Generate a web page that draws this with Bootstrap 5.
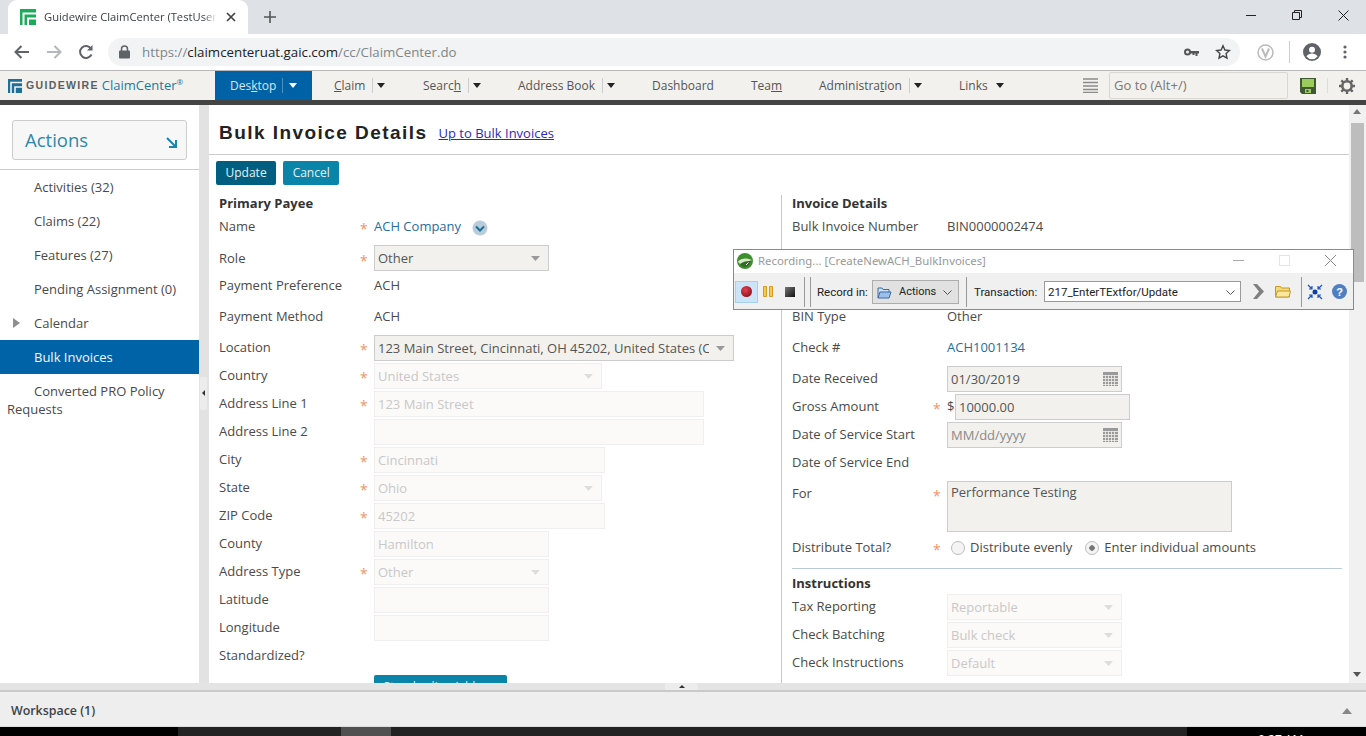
<!DOCTYPE html>
<html lang="en">
<head>
  <meta charset="UTF-8" />
  <meta name="viewport" content="width=device-width, initial-scale=1.0"/>
  <title>Guidewire ClaimCenter</title>
  <link href="https://cdn.jsdelivr.net/npm/bootstrap@5.3.0/dist/css/bootstrap.min.css" rel="stylesheet" />
  <style>
    html, body { height: 100%; }
    body {
      width: 1366px; height: 736px; overflow: hidden; position: relative;
      font-family: "Open Sans", "Noto Sans", sans-serif; font-size: 13px; color: #4a4a4a;
      background: #fff;
    }
    a { color: #1f6e9c; text-decoration: none; }

    /* browser chrome */
    .tabstrip { height: 34px; background: #dee1e6; padding-left: 8px; flex: none; }
    .chrome-tab {
      width: 240px; height: 34px; background: #fff; border-radius: 9px 9px 0 0;
      padding-left: 12px; color: #3c4043; font-size: 11.2px; overflow: hidden; white-space: nowrap;
    }
    .tab-title { width: 173px; margin-left: 8px; overflow: hidden; -webkit-mask-image: linear-gradient(90deg, #000 92%, transparent); mask-image: linear-gradient(90deg, #000 92%, transparent); }
    .tab-close { margin-left: 9px; }
    .tab-plus { margin-left: 15px; margin-top: 10px; }
    .win-btns { margin-left: auto; }
    .win-btn { width: 46px; height: 30px; }
    .urlbar { height: 37px; background: #fff; border-bottom: 1px solid #b9b9b9; flex: none; }
    .urlnav { width: 108px; padding-left: 14px; gap: 16px; }
    .urlpill {
      width: 1132px; height: 28px; background: #f1f3f4; border-radius: 14px;
      padding-left: 11px; font-size: 13.3px; color: #80868b; white-space: nowrap;
    }
    .urlpill b { font-weight: 400; color: #202124; }
    .url-text { margin-left: 12px; padding-top: 2px; }
    .urlright { margin-left: auto; padding-right: 9px; gap: 16px; }
    .ext-v { margin-left: 17px; }
    .url-sep { width: 1px; height: 22px; background: #ccc; margin-left: 15px; }
    .avatar { margin-left: 13px; }
    .dots { margin-left: 22px; }

    /* app header */
    .appbar { height: 29px; background: #f3f1ed; flex: none; white-space: nowrap; color: #555; font-size: 12px; }
    .brandbox { width: 215px; padding-left: 8px; }
    .brand-gw { font-family: "Liberation Sans", sans-serif; font-weight: 700; font-size: 10.5px; letter-spacing: 1.35px; color: #5a5f63; margin-left: 4px; }
    .brand-cc { font-size: 13px; color: #1b78a6; margin-left: 3px; }
    .brand-cc sup { font-size: 8px; top: -.6em; }
    .nav-desk { width: 97px; height: 29px; background: #0062a6; color: #d5e7f2; padding-left: 15px; }
    .nav-desk .nav-sep { background: #4d90c1; margin-left: 6px; }
    .nav-desk .nav-caret { border-top-color: #fff; margin-left: 6px; }
    .nav-sep { width: 1px; height: 15px; background: #ccc; margin-left: 7px; }
    .nav-caret { width: 0; height: 0; border: 4px solid transparent; border-top: 5px solid #222; border-bottom: 0; margin-left: 4px; }
    .tn-claim { width: 89px; margin-left: 22px; }
    .tn-search { width: 95px; }
    .tn-addr { width: 134px; }
    .tn-dash { width: 99px; }
    .tn-team { width: 68px; }
    .tn-admin { width: 140px; }
    .tn-links { width: 124px; }
    .tn-links .nav-caret { margin-left: 8px; }
    .goto { width: 179px; height: 27px; border: 1px solid #d9d7d2; background: #f3f1ed; padding-left: 4px; color: #777; margin-left: 11px; border-radius: 2px; font-size: 13px; }
    .hdr-sep { width: 1px; height: 15px; background: #ddd; margin-left: 11px; }
    .saveic { margin-left: 12px; }
    .gearic { margin-left: 11px; }
    .darkbar { height: 5px; background: #444; flex: none; }

    /* work area */
    .workarea { height: 578px; flex: none; overflow: hidden; }
    .sidepane { width: 199px; flex: none; }
    .act-box {
      margin: 15px 12px 9px; height: 40px; background: #f7f7f7; border: 1px solid #ccc; border-radius: 3px;
      padding: 0 9px 0 12px; font-size: 18.5px; color: #2e87ad;
    }
    .act-arrow { margin-top: 4px; }
    .side-list { border-top: 1px solid #ccc; border-radius: 0; }
    .side-list .list-group-item {
      border: 0; padding: 0 0 0 34px; height: 34px; line-height: 34px; color: #4a4a4a; font-size: 13px; position: relative;
    }
    .side-list .list-group-item.active { background: #0063a8; color: #f2f8fb; margin-top: 0; }
    .side-list .side-wrap { height: auto; line-height: 18px; padding: 8px 10px 8px 7px; text-indent: 27px; }
    .side-tri { position: absolute; left: 13px; top: 12px; width: 0; height: 0; border: 5px solid transparent; border-left: 7px solid #8e8e8e; border-right: 0; }
    .vsplit { width: 10px; flex: none; background: #e2e2e2; position: relative; }
    .vgrip { position: absolute; left: 1px; top: 272px; width: 7px; height: 33px; background: #ececec; border-radius: 2px; }
    .vgrip::after { content: ""; position: absolute; left: 2px; top: 13px; border: 3px solid transparent; border-right: 3px solid #333; border-left: 0; }
    .mainpane { width: 1140px; flex: none; overflow: hidden; }
    .titlebar { height: 50px; border-bottom: 1px solid #ccc; padding: 8px 0 0 10px; }
    .pagetitle { font-family: "Liberation Sans", sans-serif; font-weight: 700; font-size: 19px; letter-spacing: 1.45px; color: #222; margin: 0; }
    .uplink { color: #2b2bb3; text-decoration: underline; margin-left: 11px; }
    .btnrow { padding: 6px 0 7px 7px; gap: 7px; }
    .btn-gw { height: 24px; padding: 0 9.5px; font-size: 12px; line-height: 22px; color: #e4f1f6; border-radius: 2px; border: 0; white-space: nowrap; }
    .btn-upd { background: #005f80; }
    .btn-can { background: #0a84a8; }
    .btn-std { background: #0a84a8; width: 133px; margin-left: 155px; margin-top: 6px; display: block; }
    .formcol-l { width: 573px; flex: none; padding-left: 10px; position: relative; }
    .formcol-l::after { content: ""; position: absolute; right: 0; top: 3px; bottom: 0; width: 1px; background: #b9ccd8; }
    .formcol-r { width: 560px; flex: none; padding-left: 10px; }
    .sechead { height: 20px; line-height: 22px; font-weight: 700; color: #333; }
    .frow { height: 28px; padding-top: 2px; }
    .flabel { width: 141px; flex: none; }
    .fstar { width: 14px; flex: none; color: #ef946a; font-size: 14px; line-height: 18px; padding-top: 3px; }
    .gap3 { margin-top: 3px; }
    .gapneg { margin-top: -1px; }
    .gapbin { margin-top: 62px; }
    .role-box { margin-top: -2px; }
    .name-drop { margin: 2px 0 0 11px; }
    .fbox, .fbox:disabled, .fbox:focus {
      height: 26px; padding: 0 3px; font-size: 13px; line-height: 24px; border-radius: 0;
      background-color: #f2f1ee; border: 1px solid #ccc; color: #555; box-shadow: none; opacity: 1; font-family: inherit;
    }
    .fbox:disabled { background-color: #fbfaf9; border-color: #efefef; color: #c8c8c8; }
    select.fbox {
      background-image: url("data:image/svg+xml,%3Csvg xmlns='http://www.w3.org/2000/svg' width='9' height='5'%3E%3Cpath d='M0 0h9L4.500 5z' fill='%23999'/%3E%3C/svg%3E");
      background-repeat: no-repeat; background-position: right 8px center; background-size: 9px 5px; padding-right: 24px;
    }
    select.fbox:disabled { background-image: url("data:image/svg+xml,%3Csvg xmlns='http://www.w3.org/2000/svg' width='9' height='5'%3E%3Cpath d='M0 0h9L4.500 5z' fill='%23ddd'/%3E%3C/svg%3E"); }
    .w175 { width: 175px; }
    .w228 { width: 228px; }
    .w231 { width: 231px; }
    .w330 { width: 330px; }
    .w360 { width: 360px; }
    .w285 { width: 285px; }
    .datewrap { position: relative; width: 175px; }
    .calic { position: absolute; right: 4px; top: 6px; }
    .ph-box::placeholder { color: #8a8a8a; opacity: 1; }
    .ta-row { height: 57px; }
    .ta-row .flabel { padding-top: 4px; }
    .ta-box, .ta-box:focus { height: 51px; margin-top: 5px; line-height: 18px; padding: 1px 3px; resize: none; }
    .ta-star { padding-top: 11px; }
    .dollar { width: 8px; flex: none; }
    .radioline { gap: 5px; margin-left: 4px; }
    .radio-gw, .radio-gw:checked {
      width: 14px; height: 14px; margin: 0; flex: none; background-color: #f4f4f4; border: 1px solid #bdbdbd; box-shadow: none;
    }
    .radio-gw:checked { background-image: radial-gradient(circle, #777 0 2.5px, transparent 3px); }
    .radio-gw.radio-gap { margin-left: 8px; }
    .sec-rule { height: 1px; background: #b9ccd8; width: 550px; margin-top: 7px; }
    .secsub { height: 22px; line-height: 22px; margin-top: 3px; margin-bottom: -2px; font-weight: 700; color: #333; }
    .vscroll { width: 17px; flex: none; background: #f1f1f1; position: relative; }
    .vthumb { position: absolute; left: 2px; top: 18px; width: 13px; height: 159px; background: #bdbdbd; }
    .sc-up, .sc-down { position: absolute; left: 4px; width: 0; height: 0; border: 4px solid transparent; }
    .sc-up { top: 4px; border-bottom: 5px solid #777; border-top: 0; }
    .sc-down { bottom: 6px; border-top: 5px solid #555; border-bottom: 0; }

    /* bottom */
    .hsplit { height: 9px; flex: none; background: #e4e4e4; border-bottom: 2px solid #c9c9c9; position: relative; }
    .hgrip { position: absolute; left: 665px; top: 0; width: 33px; height: 7px; background: #ececec; border-radius: 2px 2px 0 0; }
    .hgrip::after { content: ""; position: absolute; left: 14px; top: 2px; border: 3px solid transparent; border-bottom: 3px solid #333; border-top: 0; }
    .wsbar { height: 35px; flex: none; background: #eee; padding: 4px 14px 0 11px; font-weight: 600; font-size: 12.4px; color: #3d4346; border-bottom: 1px solid #ddd; }
    .ws-tri { width: 0; height: 0; border: 5px solid transparent; border-bottom: 6px solid #888; border-top: 0; }
    .taskbar { height: 9px; flex: none; background: #222; overflow: hidden; position: relative; }
    .tb-start { width: 178px; background: #000; }
    .tb-mid { width: 163px; }
    .tb-act { width: 50px; background: #505050; }
    .tb-fill { width: 796px; }
    .tb-clock { flex: 1; background: #000; color: #fff; font-size: 12px; padding: 4px 0 0 71px; white-space: nowrap; }

    /* recorder window sits over the page */
    .recwin {
      position: absolute; left: 733px; top: 249px; width: 621px; height: 61px; border: 1px solid #8a8a8a; background: #f0f0f0;
      font-family: "Noto Sans", "Open Sans", sans-serif; font-size: 11.4px; color: #222; white-space: nowrap; overflow: hidden;
    }
    .rectitle { height: 23px; background: #fff; padding: 0 0 2px 3px; color: #999; }
    .rectitle span { margin-left: 5px; }
    .recctl { margin-left: auto; gap: 35px; padding-right: 17px; }
    .rectools { height: 37px; padding-left: 1px; font-family: Roboto, sans-serif; font-size: 11.5px; }
    .rec-on { width: 23px; height: 22px; background: #cce4f7; border: 1px solid #a8cfee; flex: none; }
    .rec-pause { margin-left: 5px; flex: none; }
    .rec-stop { margin-left: 12px; flex: none; }
    .rec-sep { width: 1px; height: 30px; background: #999; flex: none; }
    .sp-a { margin-left: 9px; }
    .sp-b { margin-left: 5px; }
    .lbl-rec { margin-left: 6px; width: 55px; flex: none; padding-top: 2px; }
    .rec-sel { width: 87px; height: 24px; background: #e1e1e1; border: 1px solid #adadad; padding: 2px 6px 0 4px; flex: none; font-size: 11px; }
    .rec-sel span { margin-left: 7px; }
    .rec-chev { margin-left: auto; }
    .sp-c { margin-left: 7px; }
    .lbl-tx { margin-left: 7px; width: 70px; flex: none; padding-top: 2px; }
    .rec-combo { width: 197px; height: 21px; background: #fff; border: 1px solid #9a9a9a; padding: 2px 5px 0 3px; flex: none; }
    .rec-next { margin-left: 12px; flex: none; }
    .rec-folder { margin-left: 11px; flex: none; }
    .sp-d { margin-left: 10px; }
    .rec-zoom { margin-left: 5px; flex: none; }
    .rec-help { margin-left: 9px; flex: none; }
  </style>
</head>
<body class="d-flex flex-column">

<!-- tab strip -->
<div class="tabstrip d-flex">
  <div class="chrome-tab d-flex align-items-center">
    <svg width="16" height="16" viewBox="0 0 16 16"><rect width="16" height="16" fill="#1aab5b"/><path d="M16 4.500H3.500V16M8 16V9.500H16" fill="none" stroke="#fff" stroke-width="2"/><path d="M10 12h4v4h-4z" fill="#1aab5b"/></svg>
    <div class="tab-title">Guidewire ClaimCenter (TestUser</div>
    <svg class="tab-close" width="10" height="10" viewBox="0 0 10 10"><path d="M1 1l8 8M9 1l-8 8" stroke="#444" stroke-width="1.700"/></svg>
  </div>
  <svg class="tab-plus" width="14" height="14" viewBox="0 0 14 14"><path d="M7 1v12M1 7h12" stroke="#555" stroke-width="1.600"/></svg>
  <div class="win-btns d-flex">
    <div class="win-btn d-flex align-items-center justify-content-center"><svg width="10" height="10" viewBox="0 0 10 10"><path d="M0 5.500h10" stroke="#222"/></svg></div>
    <div class="win-btn d-flex align-items-center justify-content-center"><svg width="10" height="10" viewBox="0 0 10 10"><path d="M.5 2.500h7v7h-7zM2.500 2.500v-2h7v7h-2" fill="none" stroke="#222"/></svg></div>
    <div class="win-btn d-flex align-items-center justify-content-center"><svg width="11" height="11" viewBox="0 0 11 11"><path d="M.5.5l10 10M10.500.5l-10 10" stroke="#222"/></svg></div>
  </div>
</div>

<!-- address bar -->
<div class="urlbar d-flex align-items-center">
  <div class="urlnav d-flex align-items-center">
    <svg width="16" height="14" viewBox="0 0 16 14"><path d="M15 7H2M7.500 1L1.500 7l6 6" fill="none" stroke="#5f6368" stroke-width="2"/></svg>
    <svg width="16" height="14" viewBox="0 0 16 14"><path d="M1 7h13M8.500 1l6 6-6 6" fill="none" stroke="#b4b7bb" stroke-width="2"/></svg>
    <svg width="16" height="16" viewBox="0 0 16 16"><path d="M13.500 10.500A6 6 0 1 1 13 4.500" fill="none" stroke="#5f6368" stroke-width="2"/><path d="M14.500 1v5.500H9z" fill="#5f6368"/></svg>
  </div>
  <div class="urlpill d-flex align-items-center">
    <svg width="11" height="14" viewBox="0 0 11 14"><path d="M2.500 6V4a3 3 0 0 1 6 0v2" fill="none" stroke="#5f6368" stroke-width="1.500"/><rect y="5.500" width="11" height="8" rx="1" fill="#5f6368"/></svg>
    <span class="url-text">https://<b>claimcenteruat.gaic.com</b>/cc/ClaimCenter.do</span>
    <div class="urlright d-flex align-items-center">
      <svg width="15" height="9" viewBox="0 0 15 9"><circle cx="3.500" cy="4" r="2.500" fill="none" stroke="#555" stroke-width="2"/><path d="M6 3h9v2.500h-1.500V8h-2V5.500h-1V7h-2V5.500H6z" fill="#555"/></svg>
      <svg width="16" height="16" viewBox="0 0 16 16"><path d="M8 1.800l1.900 4.200 4.600.5-3.400 3.100.9 4.600L8 11.900l-4 2.300.9-4.600L1.500 6.500 6.100 6z" fill="none" stroke="#444" stroke-width="1.400"/></svg>
    </div>
  </div>
  <svg class="ext-v" width="17" height="17" viewBox="0 0 17 17"><circle cx="8.500" cy="8.500" r="7.500" fill="none" stroke="#bbb" stroke-width="1.500"/><path d="M5 4.500l3.500 8 3.500-8" fill="none" stroke="#bbb" stroke-width="2"/></svg>
  <div class="url-sep"></div>
  <svg class="avatar" width="18" height="18" viewBox="0 0 18 18"><circle cx="9" cy="9" r="9" fill="#5f6368"/><circle cx="9" cy="6.800" r="3" fill="#fff"/><path d="M3.500 13.500c1-2.300 3.500-3 5.500-3s4.500.7 5.500 3a7 7 0 0 1-11 0z" fill="#fff"/></svg>
  <svg class="dots" width="4" height="14" viewBox="0 0 4 14"><circle cx="2" cy="2" r="1.600" fill="#5f6368"/><circle cx="2" cy="7" r="1.600" fill="#5f6368"/><circle cx="2" cy="12" r="1.600" fill="#5f6368"/></svg>
</div>

<!-- app header -->
<div class="appbar d-flex align-items-center">
  <div class="brandbox d-flex align-items-center">
    <svg width="14" height="14" viewBox="0 0 14 14"><rect width="14" height="14" fill="#1d6f99"/><path d="M14 3.500H3V14M7 14V8h7" fill="none" stroke="#f3f1ed" stroke-width="1.600"/></svg>
    <span class="brand-gw">GUIDEWIRE</span><span class="brand-cc">ClaimCenter<sup>®</sup></span>
  </div>
  <div class="nav-desk d-flex align-items-center"><span>Des<u>k</u>top</span><i class="nav-sep"></i><i class="nav-caret"></i></div>
  <div class="tn-claim d-flex align-items-center"><span><u>C</u>laim</span><i class="nav-sep"></i><i class="nav-caret"></i></div>
  <div class="tn-search d-flex align-items-center"><span>Searc<u>h</u></span><i class="nav-sep"></i><i class="nav-caret"></i></div>
  <div class="tn-addr d-flex align-items-center"><span>Address Book</span><i class="nav-sep"></i><i class="nav-caret"></i></div>
  <div class="tn-dash">Dashboard</div>
  <div class="tn-team">Tea<u>m</u></div>
  <div class="tn-admin d-flex align-items-center"><span>Administra<u>t</u>ion</span><i class="nav-sep"></i><i class="nav-caret"></i></div>
  <div class="tn-links d-flex align-items-center"><span>Links</span><i class="nav-caret"></i></div>
  <svg width="15" height="15" viewBox="0 0 15 15"><path d="M0 1h15M0 4.500h15M0 8h15M0 11.500h15M0 14.500h15" stroke="#8b8b8b" stroke-width="1.300"/></svg>
  <div class="goto d-flex align-items-center">Go to (Alt+/)</div>
  <svg class="saveic" width="16" height="16" viewBox="0 0 16 16"><path d="M0 0h16v16H2l-2-2z" fill="#3f5a33"/><rect x="2" y="1" width="12" height="8" fill="#9ccb5d"/><rect x="5" y="11" width="6" height="4" fill="#9ccb5d"/><rect x="6.500" y="12" width="2" height="2" fill="#3f5a33"/></svg>
  <div class="hdr-sep"></div>
  <svg class="gearic" width="16" height="16" viewBox="0 0 16 16"><circle cx="8" cy="8" r="4.700" fill="none" stroke="#666" stroke-width="2.600"/><path d="M8 0v3M8 13v3M0 8h3M13 8h3M2.300 2.300l2.100 2.100M11.600 11.600l2.100 2.100M13.700 2.300l-2.100 2.100M4.400 11.600l-2.100 2.100" stroke="#666" stroke-width="2.400"/></svg>
</div>
<div class="darkbar"></div>

<!-- work area -->
<div class="workarea d-flex">
  <div class="sidepane">
    <div class="act-box d-flex justify-content-between align-items-center">
      <span>Actions</span>
      <svg class="act-arrow" width="11" height="11" viewBox="0 0 11 11"><path d="M1 1l8 8M10 3v7H3" fill="none" stroke="#1c84ad" stroke-width="2"/></svg>
    </div>
    <div class="list-group list-group-flush side-list">
      <a class="list-group-item">Activities (32)</a>
      <a class="list-group-item">Claims (22)</a>
      <a class="list-group-item">Features (27)</a>
      <a class="list-group-item">Pending Assignment (0)</a>
      <a class="list-group-item"><i class="side-tri"></i>Calendar</a>
      <a class="list-group-item active">Bulk Invoices</a>
      <a class="list-group-item side-wrap">Converted PRO Policy Requests</a>
    </div>
  </div>
  <div class="vsplit"><div class="vgrip"></div></div>

  <div class="mainpane">
    <div class="titlebar d-flex align-items-center">
      <h1 class="pagetitle">Bulk Invoice Details</h1>
      <a class="uplink" href="#">Up to Bulk Invoices</a>
    </div>
    <div class="btnrow d-flex">
      <button class="btn btn-gw btn-upd">Update</button>
      <button class="btn btn-gw btn-can">Cancel</button>
    </div>
    <div class="d-flex">
      <!-- left column -->
      <div class="formcol-l">
        <div class="sechead">Primary Payee</div>
        <div class="frow d-flex align-items-center"><div class="flabel">Name</div><div class="fstar">*</div><a href="#">ACH Company</a>
          <svg class="name-drop" width="16" height="16" viewBox="0 0 16 16"><circle cx="8" cy="8" r="7.500" fill="#b9ccd9"/><path d="M4 6.500l4 4 4-4" fill="none" stroke="#1d6f99" stroke-width="2"/></svg>
        </div>
        <div class="frow d-flex align-items-center mt-1"><div class="flabel">Role</div><div class="fstar">*</div>
          <select class="form-select fbox w175 role-box"><option>Other</option></select></div>
        <div class="frow d-flex align-items-center gapneg"><div class="flabel">Payment Preference</div><div class="fstar"></div>ACH</div>
        <div class="frow d-flex align-items-center gap3"><div class="flabel">Payment Method</div><div class="fstar"></div>ACH</div>
        <div class="frow d-flex align-items-center gap3"><div class="flabel">Location</div><div class="fstar">*</div>
          <select class="form-select fbox w360"><option>123 Main Street, Cincinnati, OH 45202, United States (Current)</option></select></div>
        <div class="frow d-flex align-items-center"><div class="flabel">Country</div><div class="fstar">*</div>
          <select class="form-select fbox w228" disabled><option>United States</option></select></div>
        <div class="frow d-flex align-items-center"><div class="flabel">Address Line 1</div><div class="fstar">*</div>
          <input class="form-control fbox w330" value="123 Main Street" disabled></div>
        <div class="frow d-flex align-items-center"><div class="flabel">Address Line 2</div><div class="fstar"></div>
          <input class="form-control fbox w330" disabled></div>
        <div class="frow d-flex align-items-center"><div class="flabel">City</div><div class="fstar">*</div>
          <input class="form-control fbox w231" value="Cincinnati" disabled></div>
        <div class="frow d-flex align-items-center"><div class="flabel">State</div><div class="fstar">*</div>
          <select class="form-select fbox w228" disabled><option>Ohio</option></select></div>
        <div class="frow d-flex align-items-center"><div class="flabel">ZIP Code</div><div class="fstar">*</div>
          <input class="form-control fbox w231" value="45202" disabled></div>
        <div class="frow d-flex align-items-center"><div class="flabel">County</div><div class="fstar"></div>
          <input class="form-control fbox w175" value="Hamilton" disabled></div>
        <div class="frow d-flex align-items-center"><div class="flabel">Address Type</div><div class="fstar">*</div>
          <select class="form-select fbox w175" disabled><option>Other</option></select></div>
        <div class="frow d-flex align-items-center"><div class="flabel">Latitude</div><div class="fstar"></div>
          <input class="form-control fbox w175" disabled></div>
        <div class="frow d-flex align-items-center"><div class="flabel">Longitude</div><div class="fstar"></div>
          <input class="form-control fbox w175" disabled></div>
        <div class="frow d-flex align-items-center"><div class="flabel">Standardized?</div></div>
        <button class="btn btn-gw btn-std">Standardize Address</button>
      </div>

      <!-- right column -->
      <div class="formcol-r">
        <div class="sechead">Invoice Details</div>
        <div class="frow d-flex align-items-center"><div class="flabel">Bulk Invoice Number</div><div class="fstar"></div>BIN0000002474</div>
        <div class="frow d-flex align-items-center gapbin"><div class="flabel">BIN Type</div><div class="fstar"></div>Other</div>
        <div class="frow d-flex align-items-center gap3"><div class="flabel">Check #</div><div class="fstar"></div><a href="#">ACH1001134</a></div>
        <div class="frow d-flex align-items-center gap3"><div class="flabel">Date Received</div><div class="fstar"></div>
          <div class="datewrap"><input class="form-control fbox" value="01/30/2019">
            <svg class="calic" width="15" height="14" viewBox="0 0 15 14"><path d="M0 0h15v14H0z" fill="#9a9a9a"/><path d="M0 3.500h15M0 6.500h15M0 9.500h15M0 12.500h15M2.500 3v11M5.500 3v11M8.500 3v11M11.500 3v11" stroke="#f2f1ee" stroke-width=".8"/></svg></div></div>
        <div class="frow d-flex align-items-center"><div class="flabel">Gross Amount</div><div class="fstar">*</div><div class="dollar">$</div>
          <input class="form-control fbox w175" value="10000.00"></div>
        <div class="frow d-flex align-items-center"><div class="flabel">Date of Service Start</div><div class="fstar"></div>
          <div class="datewrap"><input class="form-control fbox ph-box" placeholder="MM/dd/yyyy">
            <svg class="calic" width="15" height="14" viewBox="0 0 15 14"><path d="M0 0h15v14H0z" fill="#9a9a9a"/><path d="M0 3.500h15M0 6.500h15M0 9.500h15M0 12.500h15M2.500 3v11M5.500 3v11M8.500 3v11M11.500 3v11" stroke="#f2f1ee" stroke-width=".8"/></svg></div></div>
        <div class="frow d-flex align-items-center"><div class="flabel">Date of Service End</div></div>
        <div class="ta-row d-flex"><div class="flabel d-flex align-items-start"><span class="pt-1">For</span></div><div class="fstar ta-star">*</div>
          <textarea class="form-control fbox ta-box w285">Performance Testing</textarea></div>
        <div class="frow d-flex align-items-center"><div class="flabel">Distribute Total?</div><div class="fstar">*</div>
          <div class="d-flex align-items-center radioline">
            <input class="form-check-input radio-gw" type="radio" name="dist"><span>Distribute evenly</span>
            <input class="form-check-input radio-gw radio-gap" type="radio" name="dist" checked><span>Enter individual amounts</span>
          </div></div>
        <div class="sec-rule"></div>
        <div class="secsub">Instructions</div>
        <div class="frow d-flex align-items-center"><div class="flabel">Tax Reporting</div><div class="fstar"></div>
          <select class="form-select fbox w175" disabled><option>Reportable</option></select></div>
        <div class="frow d-flex align-items-center"><div class="flabel">Check Batching</div><div class="fstar"></div>
          <select class="form-select fbox w175" disabled><option>Bulk check</option></select></div>
        <div class="frow d-flex align-items-center"><div class="flabel">Check Instructions</div><div class="fstar"></div>
          <select class="form-select fbox w175" disabled><option>Default</option></select></div>
      </div>
    </div>
  </div>
  <div class="vscroll"><i class="sc-up"></i><div class="vthumb"></div><i class="sc-down"></i></div>
</div>

<!-- bottom -->
<div class="hsplit"><div class="hgrip"></div></div>
<div class="wsbar d-flex align-items-center justify-content-between"><span>Workspace (1)</span><i class="ws-tri"></i></div>
<div class="taskbar d-flex">
  <div class="tb-start"></div><div class="tb-mid"></div><div class="tb-act"></div><div class="tb-fill"></div><div class="tb-clock">9:27 AM</div>
</div>

<!-- recorder window -->
<div class="recwin">
  <div class="rectitle d-flex align-items-center">
    <svg width="16" height="16" viewBox="0 0 16 16"><circle cx="8" cy="8" r="8" fill="#3f8f2f"/><path d="M1 8.500c3-3.500 9-4 14-1.500-3 1-6 2.500-8 5-3 0-5-1.500-6-3.500z" fill="#d8e8c8"/><path d="M3 11c3-2.500 7-3.500 11-3-1 4-4 6-7 6-2 0-3-1.500-4-3z" fill="#2f6f25"/><path d="M9 12l2.500-2.500" stroke="#fff"/></svg>
    <span>Recording... [CreateNewACH_BulkInvoices]</span>
    <div class="recctl d-flex align-items-center">
      <svg width="11" height="11" viewBox="0 0 11 11"><path d="M0 5.500h11" stroke="#aaa"/></svg>
      <svg width="11" height="11" viewBox="0 0 11 11"><rect x=".5" y=".5" width="10" height="10" fill="none" stroke="#e4e4e4"/></svg>
      <svg width="11" height="11" viewBox="0 0 11 11"><path d="M0 0l11 11M11 0L0 11" stroke="#888"/></svg>
    </div>
  </div>
  <div class="rectools d-flex align-items-center">
    <div class="rec-on d-flex align-items-center justify-content-center"><svg width="11" height="11" viewBox="0 0 11 11"><defs><radialGradient id="recRed" cx=".4" cy=".35" r=".7"><stop offset="0" stop-color="#e2404c"/><stop offset="1" stop-color="#8f1220"/></radialGradient></defs><circle cx="5.500" cy="5.500" r="5.500" fill="url(#recRed)"/></svg></div>
    <svg class="rec-pause" width="10" height="11" viewBox="0 0 10 11"><path d="M.5.500h3v10h-3zM6.500.500h3v10h-3z" fill="#f7c948" stroke="#d89a20"/></svg>
    <svg class="rec-stop" width="10" height="10" viewBox="0 0 10 10"><defs><linearGradient id="recStop" x1="0" y1="0" x2="1" y2="1"><stop offset="0" stop-color="#777"/><stop offset="1" stop-color="#111"/></linearGradient></defs><rect width="10" height="10" fill="url(#recStop)"/></svg>
    <div class="rec-sep sp-a"></div><div class="rec-sep sp-b"></div>
    <span class="lbl-rec">Record in:</span>
    <div class="rec-sel d-flex align-items-center">
      <svg width="15" height="13" viewBox="0 0 15 13"><path d="M1 12V2h4l1 1.500h6V6" fill="#cfe0f5" stroke="#3a6ea5"/><path d="M1 12l2-6h11l-2 6z" fill="#9cc0ea" stroke="#3a6ea5"/></svg>
      <span>Actions</span>
      <svg class="rec-chev" width="9" height="6" viewBox="0 0 9 6"><path d="M.5.500l4 4 4-4" fill="none" stroke="#555"/></svg>
    </div>
    <div class="rec-sep sp-c"></div>
    <span class="lbl-tx">Transaction:</span>
    <div class="rec-combo d-flex align-items-center justify-content-between"><span>217_EnterTExtfor/Update</span>
      <svg width="9" height="6" viewBox="0 0 9 6"><path d="M.5.500l4 4 4-4" fill="none" stroke="#555"/></svg></div>
    <svg class="rec-next" width="11" height="15" viewBox="0 0 11 15"><path d="M0 0h4l7 7.500L4 15H0l6-7.500z" fill="#808080"/></svg>
    <svg class="rec-folder" width="16" height="13" viewBox="0 0 16 13"><path d="M.5 12V1.500h5l1 1.500h8v9z" fill="#f6d977" stroke="#c49a2c"/><path d="M.5 12l2-6h13l-1.500 6z" fill="#fbe89c" stroke="#c49a2c"/></svg>
    <div class="rec-sep sp-d"></div>
    <svg class="rec-zoom" width="16" height="16" viewBox="0 0 16 16"><circle cx="8" cy="8" r="2.500" fill="#0b3fa8"/><path d="M1 1l4 4M5 2v3H2M15 1l-4 4M11 2v3h3M1 15l4-4M5 14v-3H2M15 15l-4-4M11 14v-3h3" fill="none" stroke="#1c54c4" stroke-width="1.200"/></svg>
    <svg class="rec-help" width="15" height="15" viewBox="0 0 15 15"><circle cx="7.500" cy="7.500" r="7.500" fill="#4f7fc0"/><text x="7.500" y="11.500" text-anchor="middle" font-family="Liberation Sans, sans-serif" font-size="11" font-weight="700" fill="#fff">?</text></svg>
  </div>
</div>

<script src="https://cdn.jsdelivr.net/npm/bootstrap@5.3.0/dist/js/bootstrap.bundle.min.js"></script>
</body>
</html>
